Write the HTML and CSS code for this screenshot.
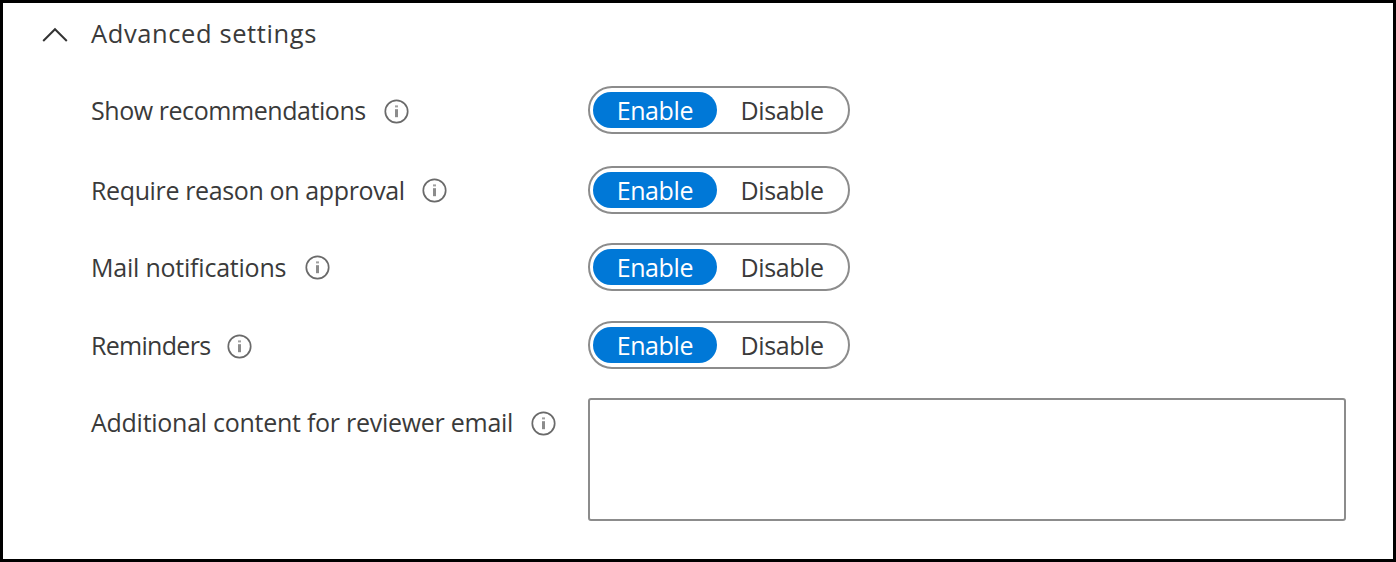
FILE: index.html
```html
<!DOCTYPE html>
<html lang="en">
<head>
<meta charset="utf-8">
<title>Advanced settings</title>
<link rel="stylesheet" href="styles.css">
</head>
<body>
<svg width="0" height="0" class="defs">
  <symbol id="info" viewBox="0 0 25 25">
    <circle cx="12.5" cy="12.5" r="11.2" fill="none" stroke="#6a6a6a" stroke-width="1.7"/>
    <rect x="11" y="6.4" width="3" height="2" fill="#a0a0a0"/>
    <rect x="11" y="10.2" width="3" height="8" fill="#8c8c8c"/>
  </symbol>
</svg>
<main class="panel">
  <header class="heading">
    <svg class="chevron" viewBox="0 0 26 16"><path d="M1.2 14 L13 2.2 L24.8 14" fill="none" stroke="#333" stroke-width="2"/></svg>
    <span class="title">Advanced settings</span>
  </header>
  <section class="row row-recommend">
    <div class="label"><span class="text t-recommend">Show recommendations</span><svg class="info"><use href="#info"/></svg></div>
    <div class="toggle"><span class="option on">Enable</span><span class="option off">Disable</span></div>
  </section>
  <section class="row row-reason">
    <div class="label"><span class="text t-reason">Require reason on approval</span><svg class="info"><use href="#info"/></svg></div>
    <div class="toggle"><span class="option on">Enable</span><span class="option off">Disable</span></div>
  </section>
  <section class="row row-mail">
    <div class="label"><span class="text t-mail">Mail notifications</span><svg class="info"><use href="#info"/></svg></div>
    <div class="toggle"><span class="option on">Enable</span><span class="option off">Disable</span></div>
  </section>
  <section class="row row-remind">
    <div class="label"><span class="text t-remind">Reminders</span><svg class="info"><use href="#info"/></svg></div>
    <div class="toggle"><span class="option on">Enable</span><span class="option off">Disable</span></div>
  </section>
  <section class="row row-content">
    <div class="label"><span class="text t-content">Additional content for reviewer email</span><svg class="info"><use href="#info"/></svg></div>
    <div class="textbox"></div>
  </section>
</main>
</body>
</html>
```

FILE: styles.css
```css
* { box-sizing: border-box; }
html, body { margin: 0; height: 100%; background: #fff; }
body {
  font-family: "Open Sans", "Noto Sans", sans-serif;
  font-size: 25px;
  color: #3a3a3a;
  overflow: hidden;
}
.defs { display: block; }
.panel {
  width: 1396px;
  height: 562px;
  border: 3px solid #000;
  display: grid;
  grid-template-rows: 83px 80px 77px 78px 77px 124px;
  align-content: start;
}
.heading { display: flex; align-items: flex-start; padding: 11px 0 0 39px; }
.chevron { width: 26px; height: 16px; margin: 13px 23px 0 0; }
.title, .text { white-space: nowrap; line-height: 38px; flex: none; }
.title { font-size: 25.5px; letter-spacing: 0.6px; }
.row {
  display: grid;
  grid-template-columns: 496.5px auto;
  justify-content: start;
  align-items: start;
  padding-left: 88px;
}
.label { display: flex; align-items: center; height: 48px; }
.info { width: 25px; height: 25px; flex: none; margin-top: 3px; }
.t-recommend { width: 293px; letter-spacing: -0.44px; }
.t-reason { width: 331px; letter-spacing: -0.37px; }
.t-mail { width: 214px; letter-spacing: -0.22px; }
.t-remind { width: 136px; letter-spacing: -0.7px; }
.t-content { width: 440px; letter-spacing: -0.27px; }
.row-reason .info, .row-mail .info { margin-top: 1px; }
.row-reason .label { height: 47px; }
.toggle {
  width: 262px;
  height: 48px;
  border: 2px solid #8c8c8c;
  border-radius: 24px;
  display: flex;
  align-items: center;
  padding-left: 3.5px;
}
.option { height: 36px; line-height: 37px; text-align: center; letter-spacing: -0.4px; }
.on { width: 124px; border-radius: 18px; background: #0078d7; color: #fff; }
.off { width: 131px; }
.textbox { width: 758px; height: 123px; border: 2px solid #8c8c8c; border-radius: 3px; }
```
